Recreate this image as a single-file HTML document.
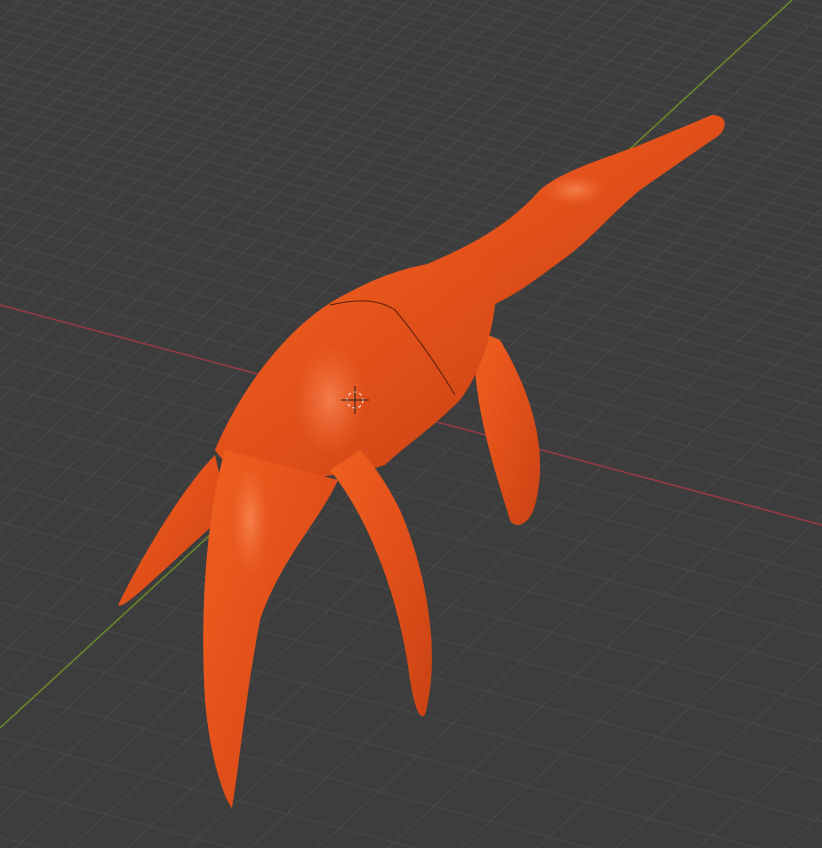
<!DOCTYPE html>
<html><head><meta charset="utf-8"><style>
html,body{margin:0;padding:0;background:#3d3d3d;width:822px;height:848px;overflow:hidden}
svg{display:block;position:absolute;left:0;top:0}
</style></head><body>
<svg width="822" height="848" viewBox="0 0 822 848" xmlns="http://www.w3.org/2000/svg">
<defs>
<linearGradient id="og" x1="0" y1="0" x2="1" y2="1">
<stop offset="0" stop-color="#f0601f"/><stop offset="0.5" stop-color="#e2501a"/><stop offset="1" stop-color="#c94214"/>
</linearGradient>
<radialGradient id="hl" cx="0.5" cy="0.5" r="0.5">
<stop offset="0" stop-color="#ff9a6a" stop-opacity="0.6"/><stop offset="1" stop-color="#ff8050" stop-opacity="0"/>
</radialGradient>
</defs>
<rect width="822" height="848" fill="#3d3d3d"/>
<g stroke="#4a4a4a" stroke-width="1" fill="none">
<path d="M0 283L822 503M0 262L822 482M0 242L822 462M0 223L822 443M0 205L822 425M0 188L822 408M0 172L822 392M0 157L822 377M0 143L822 363M0 130L822 350M0 118L822 338M0 106L822 326M0 95L822 315M0 84L822 304M0 73L822 293M0 62L822 282M0 51L822 271M0 40L822 260M0 29L822 249M0 18L822 238M0 7L822 227M0 -4L822 216M0 -15L822 205M0 -26L822 194M0 -37L822 183M0 -48L822 172M0 -59L822 161M0 -70L822 150M0 -81L822 139M0 -92L822 128M0 -103L822 117M0 -114L822 106M0 -125L822 95M0 -136L822 84M0 -147L822 73M0 -158L822 62M0 -169L822 51M0 -180L822 40M0 -191L822 29M0 -202L822 18M0 -213L822 7M0 -224L822 -4"/>
<path d="M0 330L822 550M0 357L822 577M0 386L822 606M0 417L822 637M0 450L822 670M0 485L822 705M0 522L822 742M0 561L822 781M0 602L822 822M0 645L822 865M0 690L822 910M0 737L822 957M0 786L822 1006M0 837L822 1057"/>
<path d="M0 770L822 14M0 815L822 59M0 862L822 106M0 912L822 156M0 965L822 209M0 1020L822 264M0 1078L822 322M0 1140L822 384M0 1205L822 449M0 1272L822 516M0 1342L822 586M0 1415L822 659M0 1490L822 734M0 1570L822 814M0 1650L822 894"/>
<path d="M0 690L822 -66M0 655L822 -101M0 622L822 -134M0 590L822 -166M0 560L822 -196M0 531L822 -225M0 503L822 -253M0 476L822 -280M0 450L822 -306M0 425L822 -331M0 400L822 -356M0 376L822 -380M0 352L822 -404M0 329L822 -427M0 306L822 -450M0 283L822 -473M0 261L822 -495M0 239L822 -517M0 217L822 -539M0 195L822 -561M0 173L822 -583M0 151L822 -605M0 129L822 -627M0 107L822 -649M0 85L822 -671M0 63L822 -693M0 41L822 -715M0 19L822 -737"/>
</g>
<line x1="0" y1="305" x2="822" y2="525" stroke="#9a3a48" stroke-width="1.5"/>
<line x1="0" y1="728" x2="792" y2="0" stroke="#6a8a2a" stroke-width="1.5"/>
<g fill="url(#og)">
<path d="M215 455 C190 480,150 540,118 605 C125 610,160 572,228 512 Z"/>
<path d="M475 330 C470 400,495 470,510 520 C515 530,530 525,535 505 C550 450,530 390,500 340 Z"/>
<path d="M400 275 C450 255,500 235,540 190 C560 172,600 160,640 145 L712 115 C730 115,728 132,712 140 L640 190 C610 215,590 240,565 258 C535 280,510 300,480 310 Z"/>
<path d="M215 450 C240 390,290 320,350 292 C400 265,450 255,495 265 C500 300,490 360,460 400 C430 430,400 450,385 465 C350 475,300 480,260 480 C240 475,225 465,215 450 Z"/>
<path d="M225 450 C205 520,200 620,205 700 C210 760,225 800,232 808 C240 760,245 700,260 620 C280 560,320 520,338 480 Z"/>
<path d="M330 470 C370 520,400 600,410 680 C415 710,420 720,425 715 C440 660,430 580,400 510 C385 480,370 460,360 450 Z"/>
</g>
<ellipse cx="330" cy="400" rx="35" ry="55" fill="url(#hl)"/>
<ellipse cx="575" cy="190" rx="30" ry="15" fill="url(#hl)"/>
<ellipse cx="250" cy="520" rx="18" ry="55" fill="url(#hl)"/>
<path d="M330 305 C360 298,380 300,395 310 C420 340,440 370,455 395" stroke="#5a2010" stroke-width="1" fill="none"/>
<g stroke="#fff" stroke-width="1"><circle cx="355" cy="400" r="8" fill="none" stroke-dasharray="3 3"/><line x1="355" y1="386" x2="355" y2="414" stroke="#222"/><line x1="341" y1="400" x2="369" y2="400" stroke="#222"/></g>
</svg>
</body></html>
